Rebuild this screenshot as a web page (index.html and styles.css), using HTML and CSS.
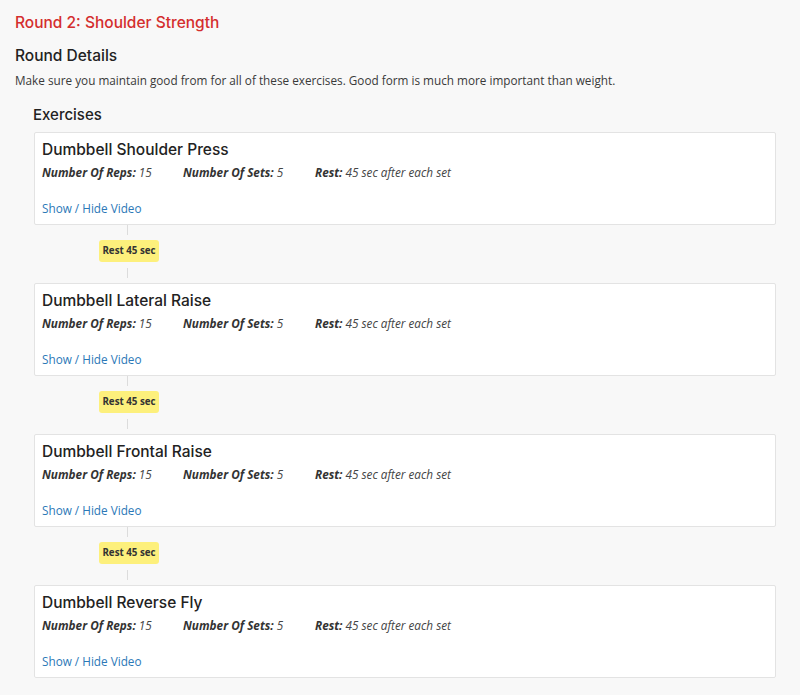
FILE: index.html
```html
<!DOCTYPE html>
<html>
<head>
<meta charset="utf-8">
<link rel="stylesheet" href="styles.css">
</head>
<body>
<div class="page">
  <h1 class="round-title">Round 2: Shoulder Strength</h1>
  <h2 class="section-title">Round Details</h2>
  <p class="desc">Make sure you maintain good from for all of these exercises. Good form is much more important than weight.</p>
  <div class="exercises">
    <h2 class="section-title ex-title">Exercises</h2>
    <div class="list">
      <div class="card">
        <h3 class="card-title">Dumbbell Shoulder Press</h3>
        <div class="meta"><span class="m1"><b>Number Of Reps:</b> 15</span><span class="m2"><b>Number Of Sets:</b> 5</span><span><b>Rest:</b> 45 sec after each set</span></div>
        <a class="link" href="#">Show / Hide Video</a>
      </div>
      <div class="rest"><div class="line top"></div><div class="badge">Rest 45 sec</div><div class="line bottom"></div></div>
      <div class="card">
        <h3 class="card-title">Dumbbell Lateral Raise</h3>
        <div class="meta"><span class="m1"><b>Number Of Reps:</b> 15</span><span class="m2"><b>Number Of Sets:</b> 5</span><span><b>Rest:</b> 45 sec after each set</span></div>
        <a class="link" href="#">Show / Hide Video</a>
      </div>
      <div class="rest"><div class="line top"></div><div class="badge">Rest 45 sec</div><div class="line bottom"></div></div>
      <div class="card">
        <h3 class="card-title">Dumbbell Frontal Raise</h3>
        <div class="meta"><span class="m1"><b>Number Of Reps:</b> 15</span><span class="m2"><b>Number Of Sets:</b> 5</span><span><b>Rest:</b> 45 sec after each set</span></div>
        <a class="link" href="#">Show / Hide Video</a>
      </div>
      <div class="rest"><div class="line top"></div><div class="badge">Rest 45 sec</div><div class="line bottom"></div></div>
      <div class="card">
        <h3 class="card-title">Dumbbell Reverse Fly</h3>
        <div class="meta"><span class="m1"><b>Number Of Reps:</b> 15</span><span class="m2"><b>Number Of Sets:</b> 5</span><span><b>Rest:</b> 45 sec after each set</span></div>
        <a class="link" href="#">Show / Hide Video</a>
      </div>
    </div>
  </div>
</div>
</body>
</html>
```

FILE: styles.css
```css
html, body {
  margin: 0;
  padding: 0;
  background: #f8f8f8;
}
body {
  font-family: "Open Sans", "Liberation Sans", sans-serif;
  color: #333;
}
.page {
  padding: 13px 24px 0 15px;
}
.round-title {
  margin: 0;
  font-family: Inter, "DejaVu Sans", sans-serif;
  font-size: 15.5px;
  font-weight: 500;
  line-height: 20px;
  color: #d42e2e;
}
.section-title {
  margin: 13px 0 0;
  font-family: Inter, "DejaVu Sans", sans-serif;
  font-size: 15.5px;
  font-weight: 500;
  line-height: 20px;
  color: #222;
}
.desc {
  margin: 5px 0 0;
  font-size: 11.75px;
  line-height: 18px;
  color: #3a3a3a;
}
.exercises {
  margin-left: 18px;
}
.ex-title {
  margin-top: 16px;
  font-size: 15px;
}
.list {
  margin: 7px 0 0 1px;
  display: flex;
  flex-direction: column;
}
.card {
  background: #fff;
  border: 1px solid #e3e3e3;
  border-radius: 2px;
  padding: 8px 7px 7px 7px;
  display: flex;
  flex-direction: column;
  align-items: flex-start;
}
.card-title {
  margin: 0;
  font-family: Inter, "DejaVu Sans", sans-serif;
  font-size: 15.5px;
  font-weight: 500;
  line-height: 18px;
  color: #222;
}
.meta {
  margin-top: 4px;
  display: flex;
  font-size: 11.75px;
  line-height: 18px;
  font-style: italic;
  color: #444;
}
.meta .m1 {
  width: 141px;
}
.meta .m2 {
  width: 132px;
}
.meta b {
  font-weight: 700;
  color: #333;
}
.link {
  margin-top: 18px;
  font-size: 11.75px;
  line-height: 18px;
  color: #2b78b7;
  text-decoration: none;
}
.rest {
  width: 60px;
  margin-left: 65px;
  height: 58px;
  display: flex;
  flex-direction: column;
  align-items: center;
}
.line {
  width: 1px;
  background: #dcdcdc;
  margin-left: -4px;
}
.line.top {
  height: 10px;
  margin-bottom: 5px;
}
.line.bottom {
  height: 10px;
  margin-top: 6px;
}
.badge {
  width: 60px;
  height: 22px;
  line-height: 22px;
  text-align: center;
  background: #fdf07c;
  border-radius: 3px;
  font-size: 9.75px;
  font-weight: 700;
  color: #333;
  white-space: nowrap;
}
```
